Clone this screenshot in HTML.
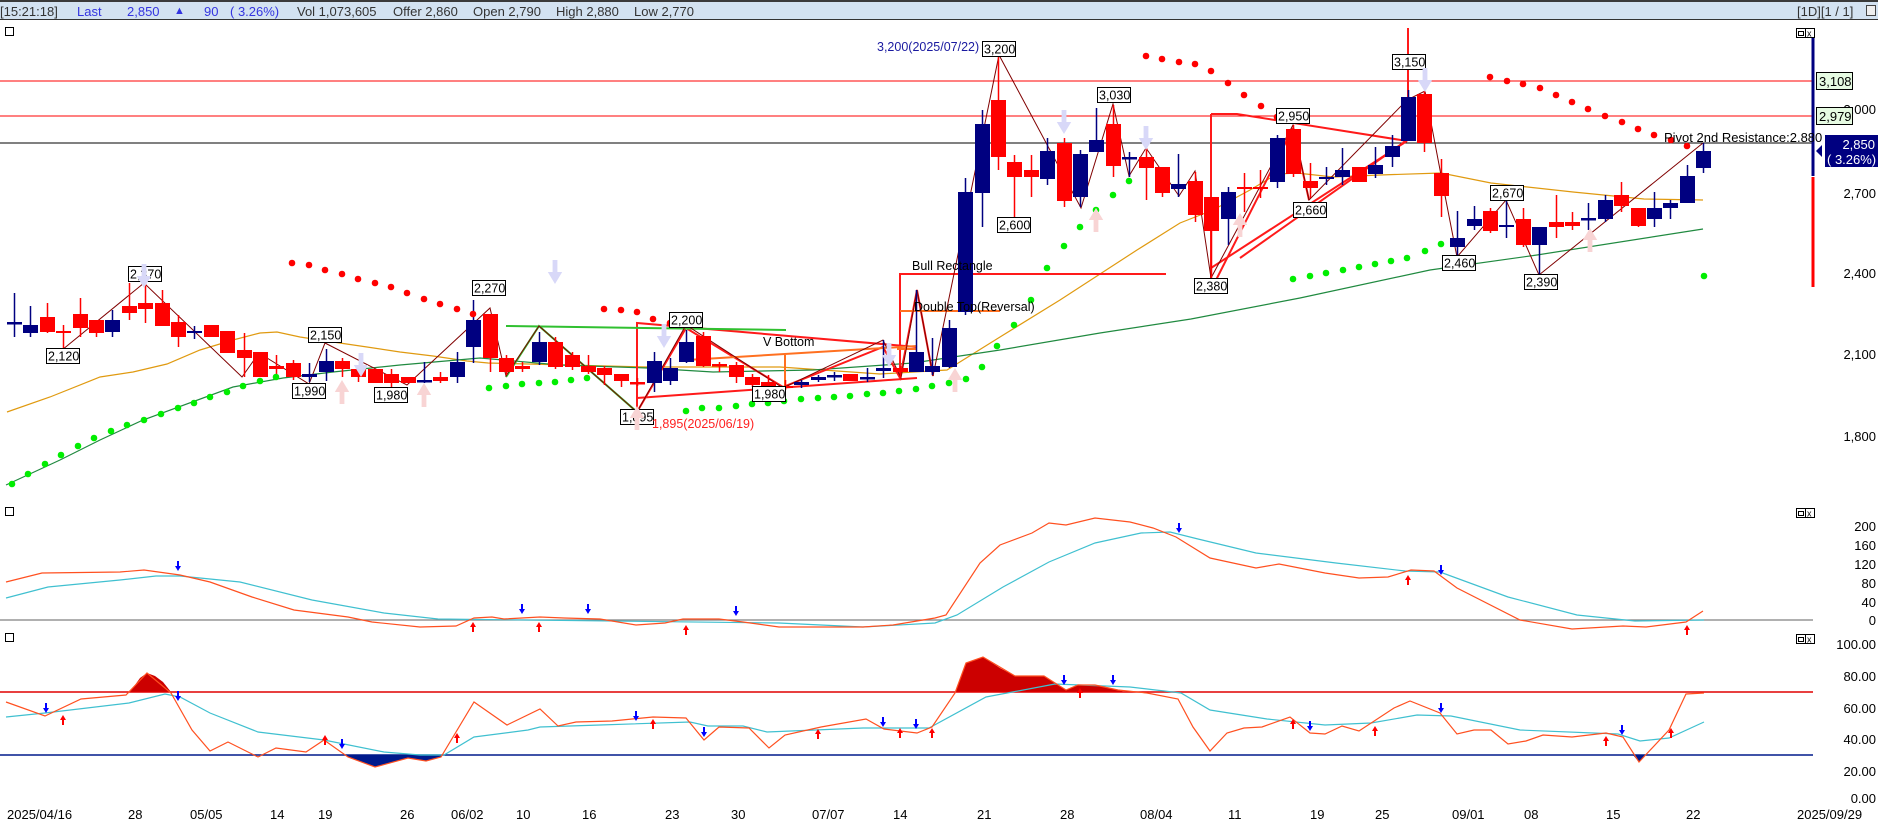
<!DOCTYPE html>
<html><head><meta charset="utf-8">
<style>
html,body{margin:0;padding:0;background:#fff;}
body{width:1878px;height:819px;overflow:hidden;position:relative;font-family:"Liberation Sans",Arial,sans-serif;}
#hdr{position:absolute;left:0;top:0;width:1878px;height:20px;background:#d3e2f1;border-top:2px solid #3a3a3a;border-bottom:1px solid #333;box-sizing:border-box;font-size:13px;color:#333;}
#hdr span{position:absolute;top:2px;white-space:nowrap;}
.bl{color:#3434e0;}
svg{position:absolute;left:0;top:0;}
svg text{font-family:"Liberation Sans",Arial,sans-serif;}
</style></head><body>
<div id="hdr">
<span style="left:0">[15:21:18]</span>
<span class="bl" style="left:77px">Last</span>
<span class="bl" style="left:127px">2,850</span>
<span class="bl" style="left:174px;font-size:11px;top:3px">▲</span>
<span class="bl" style="left:204px">90</span>
<span class="bl" style="left:230px">( 3.26%)</span>
<span style="left:297px">Vol 1,073,605</span>
<span style="left:393px">Offer 2,860</span>
<span style="left:473px">Open 2,790</span>
<span style="left:556px">High 2,880</span>
<span style="left:634px">Low 2,770</span>
<span style="left:1797px">[1D][1 / 1]</span>
<span style="left:1866px;top:3px;width:10px;height:11px;border:1px solid #444;box-sizing:border-box;background:#eee"></span>
</div>
<svg id="s" width="1878" height="819" viewBox="0 0 1878 819" style="top:0">
<g id="bg"></g>
<!-- horizontal lines main -->
<line x1="0" y1="81" x2="1813" y2="81" stroke="#ff0000" stroke-width="1"/>
<line x1="0" y1="116" x2="1813" y2="116" stroke="#ff0000" stroke-width="1"/>
<line x1="0" y1="143" x2="1813" y2="143" stroke="#000" stroke-width="1"/>
<!-- right vertical bar -->
<line x1="1813" y1="28" x2="1813" y2="176" stroke="#000080" stroke-width="3"/>
<line x1="1813" y1="177" x2="1813" y2="287" stroke="#ff0000" stroke-width="3"/>
<!-- MAs -->
<polyline fill="none" stroke="#e09a10" stroke-width="1.2" points="7,412 50,397 100,377 133,372 167,364 200,350 233,340 260,333 277,332 300,337 333,342 367,347 400,352 433,356 467,361 488,363 647,367 780,367 880,374 947,370 1000,337 1060,300 1137,250 1180,223 1213,210 1250,190 1277,174 1297,173 1333,177 1380,175 1441,173 1491,183 1573,192 1644,199 1703,200"/>
<polyline fill="none" stroke="#208a40" stroke-width="1.2" points="6,485 60,460 100,440 143,420 233,387 283,378 333,372 400,365 480,358 560,365 647,368 713,372 813,370 913,363 1000,350 1100,333 1191,319 1300,298 1430,270 1537,255 1703,229"/>
<!-- pattern lines -->
<g fill="none" stroke="#ff1a1a" stroke-width="2">
<polyline points="637,412 637,323 917,347"/>
<line x1="637" y1="398" x2="917" y2="378"/>
<polyline points="637,412 686,328 783,387 883,347 900,378 917,290 933,376"/>
<polyline points="900,378 900,274 1166,274"/>
<line x1="1211" y1="114" x2="1211" y2="282"/>
<polyline points="1211,114 1237,114 1407,141"/>
<line x1="1211" y1="268" x2="1407" y2="141"/>
<line x1="1215" y1="282" x2="1293" y2="128"/>
<line x1="1240" y1="258" x2="1410" y2="138"/>
<line x1="1408" y1="28" x2="1408" y2="141"/>
<polyline points="1293,128 1309,200"/>
</g>
<g fill="none" stroke="#ff7020" stroke-width="2">
<polyline points="687,360 917,346"/>
<line x1="785" y1="355" x2="785" y2="387"/>
<line x1="897" y1="349" x2="917" y2="349"/>
<line x1="900" y1="311" x2="1000" y2="311"/>
</g>
<g fill="none" stroke="#30c030" stroke-width="2">
<line x1="506" y1="326" x2="786" y2="330"/>
<polyline points="506,377 539,326 637,412"/>
</g>
<!-- zigzag -->
<polyline fill="none" stroke="#800000" stroke-width="1" points="62,350 144,283 242,377 259,353 309,384 325,343 407,385 490,308 506,376 539,326 637,412 686,325 783,388 883,340 901,378 917,290 933,376 999,55 1081,208 1113,104 1129,176 1146,148 1179,196 1195,171 1211,278 1293,125 1309,200 1407,100 1425,91 1441,175 1457,257 1506,200 1539,275 1703,143"/>
<g id="cd"></g>
<g id="dots"></g>
<!-- labels -->
<g font-size="12.5" fill="#000">
<g id="lbls"></g>
<text x="877" y="51" fill="#1a1aa0">3,200(2025/07/22)</text>
<text x="652" y="428" fill="#ff2020">1,895(2025/06/19)</text>
<text x="763" y="346" fill="#000">V Bottom</text>
<text x="912" y="270">Bull Rectangle</text>
<text x="914" y="311">Double Top(Reversal)</text>
<text x="1664" y="142" font-size="13">Pivot 2nd Resistance:2.880</text>
</g>
<!-- right axis main -->
<g font-size="13" fill="#000" text-anchor="end">
<text x="1876" y="114">3,000</text>
<text x="1876" y="198">2,700</text>
<text x="1876" y="278">2,400</text>
<text x="1876" y="359">2,100</text>
<text x="1876" y="441">1,800</text>
</g>
<rect x="1816.5" y="72.5" width="36" height="17" fill="#e6fbe2" stroke="#000"/>
<text x="1819" y="86" font-size="13">3,108</text>
<rect x="1816.5" y="107.5" width="36" height="17" fill="#e6fbe2" stroke="#000"/>
<text x="1819" y="121" font-size="13">2,979</text>
<rect x="1825" y="135" width="53" height="32" fill="#000080"/>
<text x="1875" y="149" font-size="13" fill="#fff" text-anchor="end">2,850</text>
<text x="1827" y="164" font-size="13" fill="#fff">( 3.26%)</text>
<polygon points="1816,151 1822,145 1822,157" fill="#000080"/>
<!-- panel 2 -->
<line x1="0" y1="620" x2="1813" y2="620" stroke="#808080" stroke-width="1.2"/>
<polyline fill="none" stroke="#40c0d0" stroke-width="1.2" points="6,598 48,587 120,580 156,576 180,576 240,582 312,600 384,613 438,619 779,623 863,627 935,623 957,615 1003,587 1049,562 1095,543 1141,533 1170,532 1198,539 1256,553 1336,563 1405,571 1440,572 1508,597 1577,615 1635,621 1704,620"/>
<polyline fill="none" stroke="#ff5020" stroke-width="1.2" points="6,582 42,573 120,572 144,570 180,575 210,582 252,597 294,610 348,617 372,622 420,627 456,626 474,618 492,617 504,619 540,617 564,618 600,619 636,625 665,623 683,619 719,619 743,622 779,627 863,627 893,625 935,618 946,615 980,563 1000,545 1032,533 1049,523 1066,525 1095,518 1130,522 1153,528 1176,537 1210,558 1256,568 1279,564 1325,573 1359,578 1388,577 1411,570 1434,571 1457,588 1520,620 1572,629 1623,626 1646,627 1686,622 1703,611"/>
<g font-size="13" fill="#000" text-anchor="end">
<text x="1876" y="531">200</text><text x="1876" y="550">160</text><text x="1876" y="569">120</text><text x="1876" y="588">80</text><text x="1876" y="607">40</text><text x="1876" y="625">0</text>
</g>
<!-- panel 3 -->
<polygon fill="#cc0000" points="130,692 140,678 147,673 155,676 163,682 171,692"/>
<polygon fill="#cc0000" points="955,692 966,663 983,657 1000,668 1015,676 1044,676 1066,690 1078,685 1095,685 1118,690 1125,692"/>
<polygon fill="#001a8c" points="345,755 348,757 375,767 408,758 426,761 441,757 442,755"/>
<polygon fill="#001a8c" points="1633,755 1639,762 1645,755"/>
<line x1="0" y1="692" x2="1813" y2="692" stroke="#e00000" stroke-width="1.5"/>
<line x1="0" y1="755" x2="1813" y2="755" stroke="#001a8c" stroke-width="1.5"/>
<polyline fill="none" stroke="#40c0d0" stroke-width="1.2" points="6,717 45,713 129,703 165,694 180,697 210,713 258,732 324,740 384,752 420,755 444,755 474,737 528,730 540,727 600,725 690,722 708,726 743,726 767,732 863,728 900,728 929,728 986,697 1055,684 1130,687 1181,693 1210,710 1267,719 1325,725 1371,723 1417,715 1451,716 1520,730 1618,734 1640,741 1669,738 1704,722"/>
<polyline fill="none" stroke="#ff5020" stroke-width="1.2" points="6,702 45,716 81,699 126,695 147,673 171,693 192,730 210,751 228,742 258,757 276,748 306,752 324,740 348,757 375,767 408,758 426,761 441,757 474,702 507,725 540,709 558,726 576,722 612,721 653,717 686,718 704,740 719,727 749,728 769,748 785,735 821,727 866,719 884,729 917,733 932,727 955,693 966,663 983,657 1015,676 1044,676 1066,690 1078,685 1095,685 1118,690 1147,693 1178,699 1193,727 1210,751 1227,733 1244,728 1262,727 1290,717 1310,733 1325,734 1342,726 1359,731 1394,708 1410,701 1440,713 1457,734 1474,730 1491,730 1508,744 1526,741 1543,735 1572,737 1606,733 1623,737 1639,762 1669,730 1686,694 1704,693"/>
<g font-size="13" fill="#000" text-anchor="end">
<text x="1876" y="649">100.00</text><text x="1876" y="681">80.00</text><text x="1876" y="713">60.00</text><text x="1876" y="744">40.00</text><text x="1876" y="776">20.00</text><text x="1876" y="803">0.00</text>
</g>
<g id="arr"></g>
<!-- panel icons -->
<g fill="#fff" stroke="#000" stroke-width="1">
<rect x="5.5" y="27.5" width="8" height="8"/><rect x="5.5" y="507.5" width="8" height="8"/><rect x="5.5" y="633.5" width="8" height="8"/>
</g>
<g id="ico"></g>
<!-- dates -->
<g font-size="13" fill="#000">
<text x="7" y="819">2025/04/16</text><text x="128" y="819">28</text><text x="190" y="819">05/05</text><text x="270" y="819">14</text><text x="318" y="819">19</text><text x="400" y="819">26</text><text x="451" y="819">06/02</text><text x="516" y="819">10</text><text x="582" y="819">16</text><text x="665" y="819">23</text><text x="731" y="819">30</text><text x="812" y="819">07/07</text><text x="893" y="819">14</text><text x="977" y="819">21</text><text x="1060" y="819">28</text><text x="1140" y="819">08/04</text><text x="1228" y="819">11</text><text x="1310" y="819">19</text><text x="1375" y="819">25</text><text x="1452" y="819">09/01</text><text x="1524" y="819">08</text><text x="1606" y="819">15</text><text x="1686" y="819">22</text><text x="1797" y="819">2025/09/29</text>
</g>
</svg>
<script>
var NS="http://www.w3.org/2000/svg";
function el(p,t,a,txt){var e=document.createElementNS(NS,t);for(var k in a)e.setAttribute(k,a[k]);if(txt)e.textContent=txt;p.appendChild(e);return e;}
var C="323,323,293,337,b|325,333,306,337,b|317,332,303,333,r|331,333,325,350,r|314,328,298,337,r|320,333,320,337,r|320,332,310,337,b|306,313,283,320,r|303,309,283,323,r|303,326,290,326,r|322,337,315,347,r|331,333,326,339,b|325,337,325,337,r|331,353,331,353,r|350,358,333,377,r|352,377,352,377,r|366,369,355,377,r|363,377,360,380,r|374,377,363,382,b|361,372,349,381,b|361,369,358,377,r|369,377,367,382,r|369,383,369,383,r|374,383,369,388,r|377,383,377,383,r|381,381,362,383,b|377,381,372,383,r|362,377,352,383,b|320,347,300,363,b|314,358,314,372,r|358,372,355,375,r|366,369,362,372,r|342,362,332,365,b|342,367,337,369,r|355,367,352,370,r|366,372,355,374,r|368,375,366,385,r|374,381,374,387,r|383,384,378,386,r|361,383,352,392,b|368,381,358,385,b|342,362,330,363,b|336,366,332,367,r|365,366,362,372,r|365,377,362,383,r|377,385,374,387,r|382,387,375,389,r|386,388,380,390,r|382,385,380,388,b|377,380,375,382,b|376,376,372,381,b|374,381,374,381,r|378,378,368,382,b|368,371,340,378,b|368,372,366,378,r|352,372,290,372,b|366,372,338,375,b|328,367,320,368,b|192,312,178,315,b|124,193,110,227,b|100,157,53,170,r|162,177,155,220,r|170,177,155,197,r|151,179,138,185,b|143,201,138,207,r|154,197,150,207,b|140,152,108,152,b|124,166,105,177,r|158,158,152,177,b|157,168,148,200,r|167,193,167,197,r|184,189,154,197,b|181,215,172,222,r|197,231,197,278,r|192,219,187,245,b|187,189,173,212,r|187,189,170,198,r|138,182,135,188,b|129,174,125,177,r|181,188,163,198,r|177,179,167,185,b|170,177,148,185,b|167,182,167,182,r|165,174,147,178,b|146,157,135,167,b|97,141,90,141,b|94,143,91,152,r|173,196,159,217,r|238,247,211,257,b|219,226,206,230,b|211,231,208,233,r|225,227,200,238,b|219,245,208,247,r|227,245,227,275,b|222,227,195,238,r|222,226,212,230,r|219,219,203,230,b|200,219,195,222,b|195,206,182,212,r|208,226,208,227,r|208,219,192,227,b|203,208,200,219,b|176,203,165,203,b|151,168,143,173,b".split("|");
var cd=document.getElementById("cd");
C.forEach(function(s,i){var v=s.split(",");var x=Math.round(14+16.4*i);var t=+v[0],b=+v[1],wt=+v[2],wb=+v[3];var col=v[4]=="r"?"#ff0000":"#000080";
el(cd,"line",{x1:x+0.5,y1:wt,x2:x+0.5,y2:wb,stroke:col,"stroke-width":1.5});
if(b-t<2){el(cd,"rect",{x:x-7,y:t-1,width:15,height:2.5,fill:col});}
else el(cd,"rect",{x:x-7,y:t,width:15,height:b-t,fill:col});});
var R=[[292,263],[309,265],[325,270],[342,274],[358,279],[375,283],[391,287],[407,293],[424,299],[440,304],[457,309],[473,314],[604,309],[621,310],[637,312],[653,319],[670,323],[1146,56],[1162,59],[1179,62],[1195,64],[1211,71],[1228,83],[1244,95],[1261,106],[1277,117],[1490,77],[1507,81],[1523,84],[1540,88],[1556,95],[1572,102],[1588,109],[1605,116],[1622,122],[1638,129],[1654,135],[1671,140],[1687,146]];
var G=[[12,484],[28,474],[45,464],[61,455],[78,446],[94,438],[111,431],[127,425],[144,420],[161,414],[178,408],[194,403],[210,397],[227,392],[243,386],[260,381],[276,377],[489,388],[506,386],[522,384],[539,383],[555,382],[571,380],[587,378],[686,411],[702,408],[719,408],[736,406],[752,404],[768,403],[784,401],[801,399],[818,398],[834,397],[850,396],[867,394],[883,393],[899,391],[916,389],[932,386],[949,383],[966,379],[982,367],[997,346],[1014,325],[1031,300],[1047,268],[1064,246],[1080,227],[1096,210],[1113,195],[1129,181],[1293,279],[1310,276],[1326,273],[1343,270],[1359,267],[1375,264],[1391,261],[1407,258],[1425,251],[1441,244],[1704,276]];
var dt=document.getElementById("dots");
R.forEach(function(p){el(dt,"circle",{cx:p[0],cy:p[1],r:3.3,fill:"#ff0000"});});
G.forEach(function(p){el(dt,"circle",{cx:p[0],cy:p[1],r:3.3,fill:"#00ee00"});});
var L=[[46,348,"2,120"],[128,266,"2,370"],[308,327,"2,150"],[292,383,"1,990"],[374,387,"1,980"],[472,280,"2,270"],[669,312,"2,200"],[620,409,"1,895"],[752,386,"1,980"],[982,41,"3,200"],[997,217,"2,600"],[1097,87,"3,030"],[1276,108,"2,950"],[1293,202,"2,660"],[1392,54,"3,150"],[1194,278,"2,380"],[1442,255,"2,460"],[1490,185,"2,670"],[1524,274,"2,390"]];
var lb=document.getElementById("lbls");
L.forEach(function(a){el(lb,"rect",{x:a[0]+0.5,y:a[1]+0.5,width:33,height:15,fill:"#fff",stroke:"#000"});el(lb,"text",{x:a[0]+2,y:a[1]+12.5},a[2]);});
var ar=document.getElementById("arr");
function arrow(x,y,up,col,s){s=s||1;var h=5*s,w=3*s;
 if(up){el(ar,"polygon",{points:(x-w)+","+(y)+" "+x+","+(y-h)+" "+(x+w)+","+y,fill:col});el(ar,"rect",{x:x-1*s,y:y,width:2*s,height:5*s,fill:col});}
 else{el(ar,"rect",{x:x-1*s,y:y-5*s,width:2*s,height:5*s,fill:col});el(ar,"polygon",{points:(x-w)+","+(y)+" "+x+","+(y+h)+" "+(x+w)+","+y,fill:col});}}
[[178,566],[522,609],[588,609],[736,611],[1179,528],[1441,570]].forEach(function(p){arrow(p[0],p[1],0,"#0000ff");});
[[473,627],[539,627],[686,630],[1408,580],[1687,630]].forEach(function(p){arrow(p[0],p[1],1,"#ff0000");});
[[46,708],[178,696],[342,744],[636,716],[704,732],[883,722],[916,724],[1064,680],[1113,680],[1310,726],[1441,708],[1622,730]].forEach(function(p){arrow(p[0],p[1],0,"#0000ff");});
[[63,720],[325,740],[457,738],[653,724],[818,734],[900,733],[932,733],[1080,693],[1293,724],[1375,731],[1606,741],[1671,733]].forEach(function(p){arrow(p[0],p[1],1,"#ff0000");});
[[342,392],[424,395],[637,418],[1096,220],[1240,225],[1590,240],[955,380]].forEach(function(p){arrow(p[0],p[1],1,"#f8d4d4",2.4);});
[[144,276],[361,365],[555,272],[664,336],[889,355],[1064,122],[1146,138],[1425,80]].forEach(function(p){arrow(p[0],p[1],0,"#d8d8f8",2.4);});
var ic=document.getElementById("ico");
[28,508,634].forEach(function(y){el(ic,"rect",{x:1796.5,y:y+0.5,width:9,height:9,fill:"#fff",stroke:"#000"});el(ic,"rect",{x:1798.5,y:y+3.5,width:5,height:4,fill:"none",stroke:"#000"});el(ic,"rect",{x:1805.5,y:y+0.5,width:9,height:9,fill:"#fff",stroke:"#000"});el(ic,"text",{x:1807,y:y+8.5,"font-size":9},"x");});
</script>
</body></html>
